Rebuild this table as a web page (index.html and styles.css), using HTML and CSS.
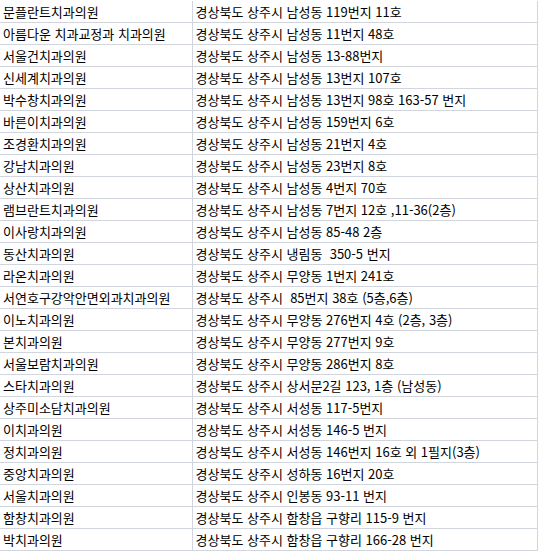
FILE: index.html
```html
<!DOCTYPE html>
<html lang="ko">
<head>
<meta charset="utf-8">
<link rel="stylesheet" href="styles.css">
</head>
<body>
<table class="list">
<colgroup><col class="c-name"><col class="c-addr"></colgroup>
<tbody>
<tr><td>문플란트치과의원</td><td>경상북도 상주시 남성동 119번지 11호</td></tr>
<tr><td>아름다운 치과교정과 치과의원</td><td>경상북도 상주시 남성동 11번지 48호</td></tr>
<tr><td>서울건치과의원</td><td>경상북도 상주시 남성동 13-88번지</td></tr>
<tr><td>신세계치과의원</td><td>경상북도 상주시 남성동 13번지 107호</td></tr>
<tr><td>박수창치과의원</td><td>경상북도 상주시 남성동 13번지 98호 163-57 번지</td></tr>
<tr><td>바른이치과의원</td><td>경상북도 상주시 남성동 159번지 6호</td></tr>
<tr><td>조경환치과의원</td><td>경상북도 상주시 남성동 21번지 4호</td></tr>
<tr><td>강남치과의원</td><td>경상북도 상주시 남성동 23번지 8호</td></tr>
<tr><td>상산치과의원</td><td>경상북도 상주시 남성동 4번지 70호</td></tr>
<tr><td>램브란트치과의원</td><td>경상북도 상주시 남성동 7번지 12호 ,11-36(2층)</td></tr>
<tr><td>이사랑치과의원</td><td>경상북도 상주시 남성동 85-48 2층</td></tr>
<tr><td>동산치과의원</td><td>경상북도 상주시 냉림동 &nbsp;350-5 번지</td></tr>
<tr><td>라온치과의원</td><td>경상북도 상주시 무양동 1번지 241호</td></tr>
<tr><td>서연호구강악안면외과치과의원</td><td>경상북도 상주시 &nbsp;85번지 38호 (5층,6층)</td></tr>
<tr><td>이노치과의원</td><td>경상북도 상주시 무양동 276번지 4호 (2층, 3층)</td></tr>
<tr><td>본치과의원</td><td>경상북도 상주시 무양동 277번지 9호</td></tr>
<tr><td>서울보람치과의원</td><td>경상북도 상주시 무양동 286번지 8호</td></tr>
<tr><td>스타치과의원</td><td>경상북도 상주시 상서문2길 123, 1층 (남성동)</td></tr>
<tr><td>상주미소담치과의원</td><td>경상북도 상주시 서성동 117-5번지</td></tr>
<tr><td>이치과의원</td><td>경상북도 상주시 서성동 146-5 번지</td></tr>
<tr><td>정치과의원</td><td>경상북도 상주시 서성동 146번지 16호 외 1필지(3층)</td></tr>
<tr><td>중앙치과의원</td><td>경상북도 상주시 성하동 16번지 20호</td></tr>
<tr><td>서울치과의원</td><td>경상북도 상주시 인봉동 93-11 번지</td></tr>
<tr><td>함창치과의원</td><td>경상북도 상주시 함창읍 구향리 115-9 번지</td></tr>
<tr><td>박치과의원</td><td>경상북도 상주시 함창읍 구향리 166-28 번지</td></tr>
</tbody>
</table>
</body>
</html>
```
FILE: styles.css
```css
html, body {
  margin: 0;
  padding: 0;
  background: #ffffff;
}
body {
  padding-top: 1px;
  font-family: "Noto Sans CJK KR", "Noto Sans", sans-serif;
  font-size: 13px;
  color: #000000;
}
.list {
  border-collapse: collapse;
  table-layout: fixed;
  width: 537px;
}
.c-name { width: 192px; }
.c-addr { width: 345px; }
.list td {
  height: 21px;
  padding: 0 0 0 3px;
  border-bottom: 1px solid #d0d5de;
  border-right: 1px solid #d0d5de;
  white-space: nowrap;
  overflow: hidden;
  line-height: 21px;
  vertical-align: middle;
}
```
